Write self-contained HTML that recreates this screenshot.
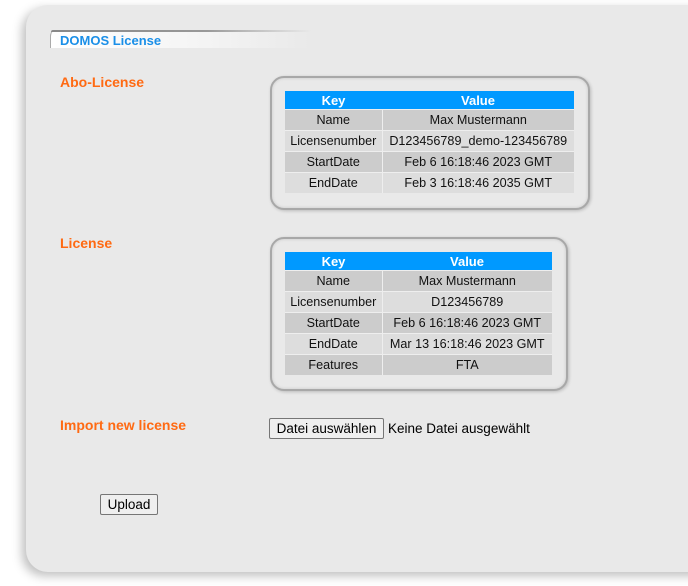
<!DOCTYPE html>
<html><head><style>
body{margin:0;width:688px;height:586px;background:#fff;position:relative;overflow:hidden;font-family:"Liberation Sans",Tahoma,sans-serif}
.panel{position:absolute;left:26px;top:5px;width:700px;height:567px;background:#e9e9e9;border-radius:22px;box-shadow:-4px 4px 10px rgba(0,0,0,.25)}
.tab{position:absolute;left:50px;top:30px;width:260px;height:18px;border-top-left-radius:6px;border-left:1px solid #aaa;background:linear-gradient(90deg,#fff 0%,#f4f4f4 60%,rgba(233,233,233,0) 100%);box-sizing:border-box}
.tab:before{content:"";position:absolute;left:0;top:0;width:260px;height:2px;background:linear-gradient(90deg,#888 0%,#999 60%,rgba(200,200,200,0) 100%);border-top-left-radius:6px}
.tab span{position:absolute;left:9px;top:3px;color:#1a8fe8;font-weight:bold;font-size:13px}
.lbl{position:absolute;left:60px;color:#ff6a13;font-weight:bold;font-size:14px}
.box{position:absolute;border:2px solid #a8a8a8;border-radius:14px;box-shadow:inset 0 0 3px rgba(0,0,0,.15),1px 1px 3px rgba(0,0,0,.2);background:#e9e9e9}
table{position:absolute;border-collapse:collapse;font-size:12.6px;color:#111}
th{background:#0099ff;color:#fff;font-size:13px;font-weight:bold;height:18px;padding:0}
td{height:20px;padding:0 3px;text-align:center;border-top:1px solid #eee;white-space:nowrap}
td:first-child{border-right:1px solid #eee}
tr.a td{background:#cccccc}tr.b td{background:#dddddd}
.btn{position:absolute;border:1px solid #767676;border-radius:2px;background:#efefef;font-size:13.5px;color:#000;box-sizing:border-box;text-align:center;line-height:19px}
</style></head><body>
<div class="panel"></div>
<div class="tab"><span>DOMOS License</span></div>
<div class="lbl" style="top:74px">Abo-License</div>
<div class="lbl" style="top:235px">License</div>
<div class="lbl" style="top:417px">Import new license</div>
<div class="box" style="left:270px;top:76px;width:316px;height:130px"></div>
<table style="left:285px;top:91px;width:289px">
<tr><th style="width:97px">Key</th><th>Value</th></tr>
<tr class="a"><td>Name</td><td>Max Mustermann</td></tr>
<tr class="b"><td>Licensenumber</td><td>D123456789_demo-123456789</td></tr>
<tr class="a"><td>StartDate</td><td>Feb 6 16:18:46 2023 GMT</td></tr>
<tr class="b"><td>EndDate</td><td>Feb 3 16:18:46 2035 GMT</td></tr>
</table>
<div class="box" style="left:270px;top:237px;width:294px;height:150px"></div>
<table style="left:285px;top:252px;width:267px">
<tr><th style="width:97px">Key</th><th>Value</th></tr>
<tr class="a"><td>Name</td><td>Max Mustermann</td></tr>
<tr class="b"><td>Licensenumber</td><td>D123456789</td></tr>
<tr class="a"><td>StartDate</td><td>Feb 6 16:18:46 2023 GMT</td></tr>
<tr class="b"><td>EndDate</td><td>Mar 13 16:18:46 2023 GMT</td></tr>
<tr class="a"><td>Features</td><td>FTA</td></tr>
</table>
<div class="btn" style="left:269px;top:418px;width:115px;height:21px">Datei auswählen</div>
<div style="position:absolute;left:388px;top:421px;font-size:13.5px;color:#000">Keine Datei ausgewählt</div>
<div class="btn" style="left:100px;top:494px;width:58px;height:21px">Upload</div>
</body></html>
